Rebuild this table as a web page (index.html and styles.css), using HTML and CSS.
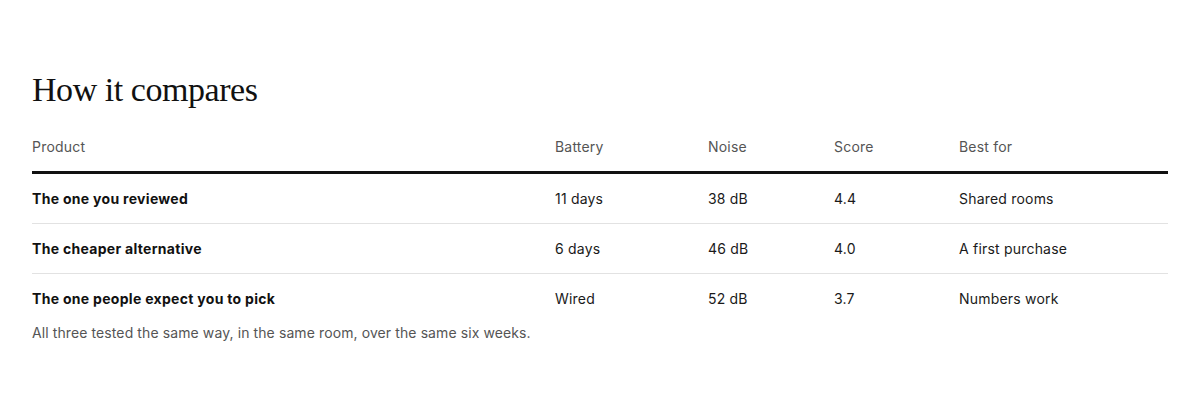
FILE: index.html
```html
<!DOCTYPE html>
<html lang="en">
<head>
<meta charset="utf-8">
<title>How it compares</title>
<link rel="stylesheet" href="styles.css">
</head>
<body>
<section class="compare">
  <h2 class="title">How it compares</h2>
  <table class="table">
    <colgroup>
      <col class="c-product">
      <col class="c-battery">
      <col class="c-noise">
      <col class="c-score">
      <col class="c-best">
    </colgroup>
    <thead>
      <tr>
        <th>Product</th>
        <th>Battery</th>
        <th>Noise</th>
        <th>Score</th>
        <th>Best for</th>
      </tr>
    </thead>
    <tbody>
      <tr>
        <td class="name">The one you reviewed</td>
        <td>11 days</td>
        <td>38 dB</td>
        <td>4.4</td>
        <td>Shared rooms</td>
      </tr>
      <tr>
        <td class="name">The cheaper alternative</td>
        <td>6 days</td>
        <td>46 dB</td>
        <td>4.0</td>
        <td>A first purchase</td>
      </tr>
      <tr>
        <td class="name">The one people expect you to pick</td>
        <td>Wired</td>
        <td>52 dB</td>
        <td>3.7</td>
        <td>Numbers work</td>
      </tr>
    </tbody>
  </table>
  <p class="note">All three tested the same way, in the same room, over the same six weeks.</p>
</section>
</body>
</html>
```

FILE: styles.css
```css
html, body {
  margin: 0;
  padding: 0;
  background: #ffffff;
}

body {
  font-family: Inter, "Liberation Sans", Arial, sans-serif;
  color: #111111;
}

.compare {
  padding: 70px 32px 0 32px;
}

.title {
  margin: 0 0 12px 0;
  font-family: "Liberation Serif", "Times New Roman", serif;
  font-weight: 400;
  font-size: 34px;
  line-height: 40px;
  letter-spacing: -0.45px;
  color: #111111;
}

.table {
  width: 100%;
  border-collapse: collapse;
  table-layout: fixed;
  font-size: 14px;
  line-height: 21px;
  letter-spacing: 0.2px;
}

.c-product { width: 523px; }
.c-battery { width: 153px; }
.c-noise { width: 126px; }
.c-score { width: 125px; }
.c-best { width: auto; }

.table th {
  text-align: left;
  font-weight: 400;
  color: #555555;
  padding: 14px 0 14px 0;
  border-bottom: 3px solid #111111;
}

.table td {
  padding: 14px 0;
  color: #1a1a1a;
  border-bottom: 1px solid #e2e2e2;
}

.table tbody tr:last-child td {
  border-bottom: none;
}

.table td.name {
  font-weight: 700;
  color: #111111;
  letter-spacing: 0.3px;
}

.note {
  margin: 0;
  font-size: 14px;
  line-height: 20px;
  letter-spacing: 0.1px;
  color: #555555;
}
```
